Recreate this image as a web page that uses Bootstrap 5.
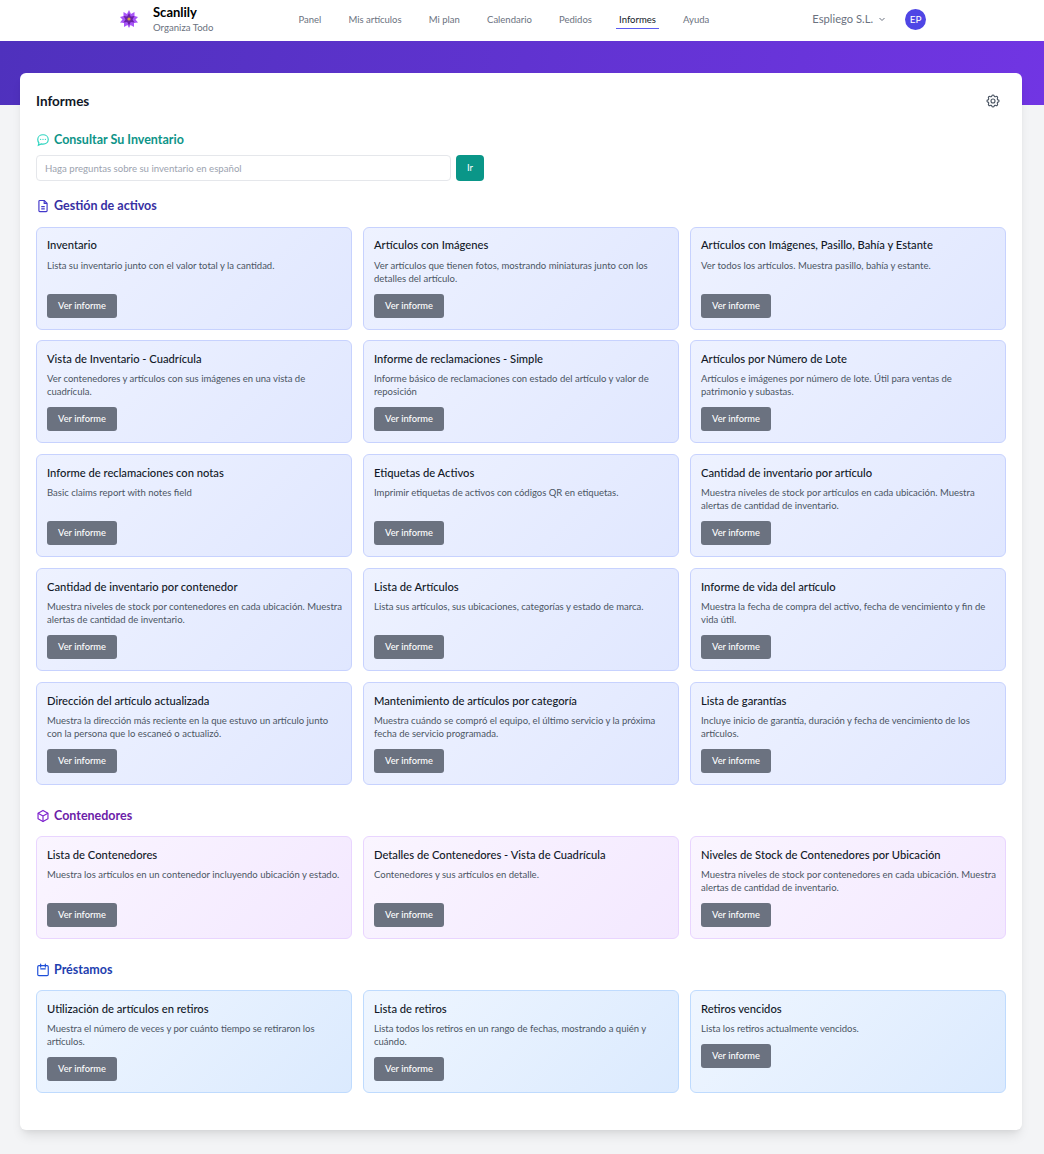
<!DOCTYPE html>
<html lang="es">
<head>
    <meta charset="UTF-8">
    <title>Informes</title>
    <link href="https://cdn.jsdelivr.net/npm/bootstrap@5.3.0/dist/css/bootstrap.min.css" rel="stylesheet">
    <style>
        body { background: #f3f4f6; font-family: "Lato", "Liberation Sans", sans-serif; color: #111827; min-height: 1154px; }
        .top-nav { height: 41px; background: #fff; padding-left: 118px; }
        .brand { margin-left: 13px; margin-bottom: 2px; }
        .brand-name { font-size: 13px; font-weight: 700; color: #000; line-height: 14px; }
        .brand-sub { font-size: 9.6px; color: #6b7280; line-height: 14px; margin-top: 2px; }
        .menu { margin-left: 82px; gap: 21.2px; align-self: flex-start; margin-top: 7px; }
        .menu a { font-size: 9.5px; color: #6b7280; text-decoration: none; padding: 0 3px; height: 22px; line-height: 25px; }
        .menu a.active { color: #111827; border-bottom: 1px solid #5b5bf0; }
        .company { font-size: 11.2px; color: #6b7280; margin-left: 100px; margin-bottom: 3px; gap: 5px; }
        .avatar { width: 21px; height: 21px; background: #4f46e5; color: #fff; font-size: 10px; margin-left: 19px; margin-bottom: 3px; }
        .band { height: 64px; background: linear-gradient(100deg, #4f31bd, #7135e3); }
        .sheet { margin: -32px 22px 24px 20px; padding: 16px 16px 37px; background: #fff; border-radius: 6px; box-shadow: 0 8px 12px -3px rgba(0,0,0,.1), 0 3px 5px -2px rgba(0,0,0,.06); }
        .sheet h1 { font-size: 13.5px; font-weight: 700; margin: 0; line-height: 24px; }
        .gear { margin-right: 5px; }
        .section-title { font-size: 12.5px; font-weight: 700; line-height: 16px; gap: 4px; }
        .section-title svg { width: 14px; height: 14px; flex: none; }
        .title-ask { margin-top: 19px; }
        .title-assets { margin-top: 17px; }
        .title-next { margin-top: 23px; }
        .t-teal { color: #0d9488; }
        .t-indigo { color: #3730a3; }
        .t-purple { color: #6b21a8; }
        .t-blue { color: #1e40af; }
        .ask-row { margin-top: 7px; gap: 5px; }
        .ask-input { width: 415px; height: 26px; font-size: 9.65px; padding: 0 8px; border-color: #e5e7eb; border-radius: 4px; }
        .ask-input::placeholder { color: #9ca3af; }
        .ask-btn { width: 28px; height: 26px; background: #0a9688; color: #fff; font-size: 9.5px; padding: 0; border: 0; border-radius: 4px; }
        .report-grid { display: grid; grid-template-columns: repeat(3, 316px); gap: 10.9px 11px; margin-top: 12.6px; }
        .report-grid.tight { margin-top: 12px; }
        .report { height: 103px; padding: 10.4px 8px 11px 10px; border-radius: 6px; border: 1px solid; }
        .report h3 { font-size: 11.2px; font-weight: 500; color: #111827; line-height: 14px; margin: 0 0 6.6px; }
        .report p { font-size: 9.5px; color: #4b5563; line-height: 13px; margin: 0; }
        .report .btn { width: 70px; height: 24px; padding: 0; font-size: 9.3px; font-weight: 500; line-height: 24px; background: #6b7280; border: 0; border-radius: 3px; color: #fff; margin-top: auto; }
        .report .btn.near { margin-top: 8.5px; }
        .r-indigo { background: linear-gradient(135deg, #eef2ff, #e0e7ff); border-color: #c7d2fe; }
        .r-purple { background: linear-gradient(135deg, #faf5ff, #f3e8ff); border-color: #e9d5ff; }
        .r-blue { background: linear-gradient(135deg, #eff6ff, #dbeafe); border-color: #bfdbfe; }
    </style>
</head>
<body>
<nav class="top-nav d-flex align-items-center">
    <svg width="22" height="22" viewBox="0 0 22 22" class="mb-1">
        <polygon fill="#a855f7" points="11,2 13,6 16.5,4 16.5,8 20,9 17.5,11.5 20,14.5 16,15 16,19 12.5,17 11,20 9.5,17 6,19 6,15 2,14.5 4.5,11.5 2,9 5.5,8 5.5,4 9,6"/>
        <polygon fill="#6b21a8" points="11,5 12.8,8.5 16.5,8 14.5,11.5 16.5,14.5 12.8,14 11,17.5 9.2,14 5.5,14.5 7.5,11.5 5.5,8 9.2,8.5"/>
        <circle cx="11" cy="11" r="1.6" fill="#d4a24a"/>
    </svg>
    <div class="brand">
        <div class="brand-name">Scanlily</div>
        <div class="brand-sub">Organiza Todo</div>
    </div>
    <div class="menu d-flex">
        <a href="#">Panel</a>
        <a href="#">Mis artículos</a>
        <a href="#">Mi plan</a>
        <a href="#">Calendario</a>
        <a href="#">Pedidos</a>
        <a href="#" class="active">Informes</a>
        <a href="#">Ayuda</a>
    </div>
    <div class="company d-flex align-items-center">Espliego S.L.
        <svg width="8" height="8" viewBox="0 0 8 8" fill="none" stroke="#6b7280" stroke-width="1"><path d="M1.5 3l2.5 2.5L6.5 3"/></svg>
    </div>
    <div class="avatar rounded-circle d-flex align-items-center justify-content-center">EP</div>
</nav>
<div class="band"></div>
<main class="sheet">
    <div class="d-flex justify-content-between align-items-center">
        <h1>Informes</h1>
        <svg class="gear" width="16" height="16" viewBox="0 0 24 24" fill="none" stroke="#4b5563" stroke-width="1.7"><path d="M10.3 4.3c.4-1.800 3-1.800 3.400 0a1.700 1.700 0 0 0 2.600 1.100c1.500-.9 3.300.8 2.400 2.400a1.700 1.700 0 0 0 1 2.500c1.800.4 1.800 3 0 3.400a1.700 1.700 0 0 0-1 2.600c.9 1.500-.9 3.300-2.400 2.400a1.700 1.700 0 0 0-2.600 1c-.4 1.800-3 1.800-3.400 0a1.700 1.700 0 0 0-2.600-1c-1.500.9-3.300-.9-2.400-2.400a1.700 1.700 0 0 0-1-2.600c-1.800-.4-1.800-3 0-3.400a1.700 1.700 0 0 0 1-2.500c-.9-1.600.9-3.300 2.400-2.400a1.700 1.700 0 0 0 2.600-1.100z"/><circle cx="12" cy="12" r="3"/></svg>
    </div>

    <div class="section-title title-ask t-teal d-flex align-items-center">
        <svg viewBox="0 0 24 24" fill="none" stroke="#2dd4bf" stroke-width="2" stroke-linecap="round"><path d="M12 3c5 0 9 3.500 9 8s-4 8-9 8c-1 0-2-.1-3-.4L4 21l1-4.200C3.800 15.300 3 13.300 3 11c0-4.500 4-8 9-8z"/><path d="M8 11h.01M12 11h.01M16 11h.01"/></svg>
        Consultar Su Inventario
    </div>
    <div class="ask-row d-flex">
        <input type="text" class="form-control ask-input" placeholder="Haga preguntas sobre su inventario en español">
        <button type="button" class="btn ask-btn">Ir</button>
    </div>

    <div class="section-title title-assets t-indigo d-flex align-items-center">
        <svg viewBox="0 0 24 24" fill="none" stroke="#4338ca" stroke-width="2" stroke-linejoin="round"><path d="M6.500 2.500H14l5 5V20a1.500 1.500 0 0 1-1.500 1.500h-11A1.500 1.500 0 0 1 5 20V4a1.500 1.500 0 0 1 1.500-1.500z"/><path d="M14 2.500v5h5M9 13h6M9 17h6"/></svg>
        Gestión de activos
    </div>
    <div class="report-grid">
        <div class="report r-indigo d-flex flex-column"><h3>Inventario</h3><p>Lista su inventario junto con el valor total y la cantidad.</p><a href="#" class="btn">Ver informe</a></div>
        <div class="report r-indigo d-flex flex-column"><h3>Artículos con Imágenes</h3><p>Ver artículos que tienen fotos, mostrando miniaturas junto con los detalles del artículo.</p><a href="#" class="btn">Ver informe</a></div>
        <div class="report r-indigo d-flex flex-column"><h3>Artículos con Imágenes, Pasillo, Bahía y Estante</h3><p>Ver todos los artículos. Muestra pasillo, bahía y estante.</p><a href="#" class="btn">Ver informe</a></div>
        <div class="report r-indigo d-flex flex-column"><h3>Vista de Inventario - Cuadrícula</h3><p>Ver contenedores y artículos con sus imágenes en una vista de cuadrícula.</p><a href="#" class="btn">Ver informe</a></div>
        <div class="report r-indigo d-flex flex-column"><h3>Informe de reclamaciones - Simple</h3><p>Informe básico de reclamaciones con estado del artículo y valor de reposición</p><a href="#" class="btn">Ver informe</a></div>
        <div class="report r-indigo d-flex flex-column"><h3>Artículos por Número de Lote</h3><p>Artículos e imágenes por número de lote. Útil para ventas de patrimonio y subastas.</p><a href="#" class="btn">Ver informe</a></div>
        <div class="report r-indigo d-flex flex-column"><h3>Informe de reclamaciones con notas</h3><p>Basic claims report with notes field</p><a href="#" class="btn">Ver informe</a></div>
        <div class="report r-indigo d-flex flex-column"><h3>Etiquetas de Activos</h3><p>Imprimir etiquetas de activos con códigos QR en etiquetas.</p><a href="#" class="btn">Ver informe</a></div>
        <div class="report r-indigo d-flex flex-column"><h3>Cantidad de inventario por artículo</h3><p>Muestra niveles de stock por artículos en cada ubicación. Muestra alertas de cantidad de inventario.</p><a href="#" class="btn">Ver informe</a></div>
        <div class="report r-indigo d-flex flex-column"><h3>Cantidad de inventario por contenedor</h3><p>Muestra niveles de stock por contenedores en cada ubicación. Muestra alertas de cantidad de inventario.</p><a href="#" class="btn">Ver informe</a></div>
        <div class="report r-indigo d-flex flex-column"><h3>Lista de Artículos</h3><p>Lista sus artículos, sus ubicaciones, categorías y estado de marca.</p><a href="#" class="btn">Ver informe</a></div>
        <div class="report r-indigo d-flex flex-column"><h3>Informe de vida del artículo</h3><p>Muestra la fecha de compra del activo, fecha de vencimiento y fin de vida útil.</p><a href="#" class="btn">Ver informe</a></div>
        <div class="report r-indigo d-flex flex-column"><h3>Dirección del artículo actualizada</h3><p>Muestra la dirección más reciente en la que estuvo un artículo junto con la persona que lo escaneó o actualizó.</p><a href="#" class="btn">Ver informe</a></div>
        <div class="report r-indigo d-flex flex-column"><h3>Mantenimiento de artículos por categoría</h3><p>Muestra cuándo se compró el equipo, el último servicio y la próxima fecha de servicio programada.</p><a href="#" class="btn">Ver informe</a></div>
        <div class="report r-indigo d-flex flex-column"><h3>Lista de garantías</h3><p>Incluye inicio de garantía, duración y fecha de vencimiento de los artículos.</p><a href="#" class="btn">Ver informe</a></div>
    </div>

    <div class="section-title title-next t-purple d-flex align-items-center">
        <svg viewBox="0 0 24 24" fill="none" stroke="#7e22ce" stroke-width="2" stroke-linejoin="round"><path d="M12 2.500l8.500 4.750v9.500L12 21.500l-8.500-4.750v-9.500z"/><path d="M3.500 7.250L12 12l8.500-4.750M12 12v9.500"/></svg>
        Contenedores
    </div>
    <div class="report-grid tight">
        <div class="report r-purple d-flex flex-column"><h3>Lista de Contenedores</h3><p>Muestra los artículos en un contenedor incluyendo ubicación y estado.</p><a href="#" class="btn">Ver informe</a></div>
        <div class="report r-purple d-flex flex-column"><h3>Detalles de Contenedores - Vista de Cuadrícula</h3><p>Contenedores y sus artículos en detalle.</p><a href="#" class="btn">Ver informe</a></div>
        <div class="report r-purple d-flex flex-column"><h3>Niveles de Stock de Contenedores por Ubicación</h3><p>Muestra niveles de stock por contenedores en cada ubicación. Muestra alertas de cantidad de inventario.</p><a href="#" class="btn">Ver informe</a></div>
    </div>

    <div class="section-title title-next t-blue d-flex align-items-center">
        <svg viewBox="0 0 24 24" fill="none" stroke="#1d4ed8" stroke-width="2" stroke-linecap="round"><rect x="3" y="4.500" width="18" height="17" rx="2"/><path d="M8 2v5M16 2v5M8 10h8"/></svg>
        Préstamos
    </div>
    <div class="report-grid tight">
        <div class="report r-blue d-flex flex-column"><h3>Utilización de artículos en retiros</h3><p>Muestra el número de veces y por cuánto tiempo se retiraron los artículos.</p><a href="#" class="btn">Ver informe</a></div>
        <div class="report r-blue d-flex flex-column"><h3>Lista de retiros</h3><p>Lista todos los retiros en un rango de fechas, mostrando a quién y cuándo.</p><a href="#" class="btn">Ver informe</a></div>
        <div class="report r-blue d-flex flex-column"><h3>Retiros vencidos</h3><p>Lista los retiros actualmente vencidos.</p><a href="#" class="btn near">Ver informe</a></div>
    </div>
</main>
<script src="https://cdn.jsdelivr.net/npm/bootstrap@5.3.0/dist/js/bootstrap.bundle.min.js"></script>
</body>
</html>
